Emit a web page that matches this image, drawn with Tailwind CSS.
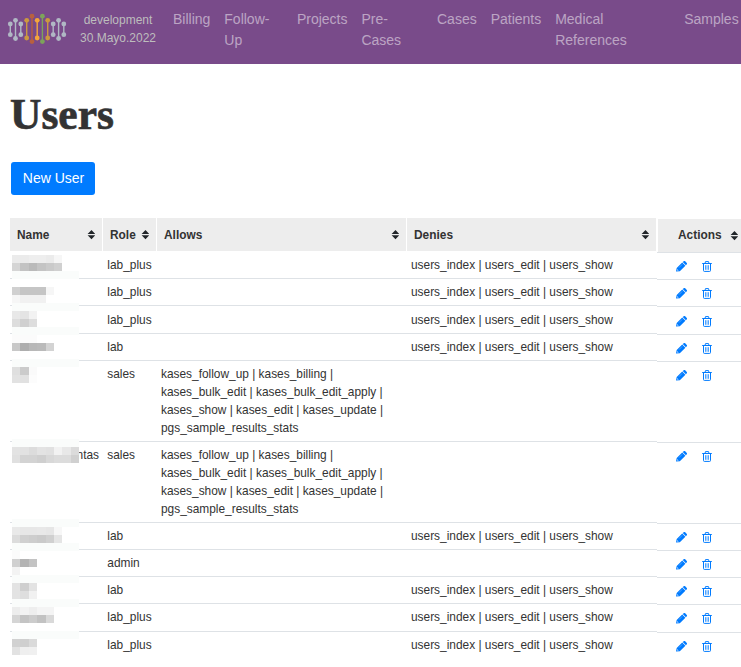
<!DOCTYPE html>
<html lang="en">
<head>
<meta charset="utf-8">
<title>Users</title>
<script src="https://cdn.jsdelivr.net/npm/@tailwindcss/browser@4"></script>
</head>
<body class="bg-white text-[#333] font-['Liberation_Sans',Arial,sans-serif] w-[741px] h-[667px] overflow-hidden">
<nav class="h-16 bg-[#794b8a] flex overflow-hidden">
  <svg id="logo" class="shrink-0 w-[72px] h-16" viewBox="0 0 72 64"></svg>
  <div class="w-[92px] shrink-0 pt-[11px] text-center text-[12px] leading-[18px] text-[#bdbdbd]">development<br>30.Mayo.2022</div>
  <div class="flex shrink-0 pl-[9px] pt-[9px] text-[14px] leading-[21px] text-white/50">
    <a class="shrink-0 w-[51.3px]">Billing</a>
    <a class="shrink-0 w-[72.6px]">Follow-<br>Up</a>
    <a class="shrink-0 w-[64.5px]">Projects</a>
    <a class="shrink-0 w-[75.6px]">Pre-<br>Cases</a>
    <a class="shrink-0 w-[53.7px]">Cases</a>
    <a class="shrink-0 w-[64.5px]">Patients</a>
    <a class="shrink-0 w-[129px]">Medical<br>References</a>
    <a class="shrink-0">Samples</a>
  </div>
</nav>
<main class="relative h-[603px] pl-[10px]">
  <h1 class="h-[98px] pt-[25px] font-['Liberation_Serif',serif] font-bold text-[43.5px] leading-[50px] [-webkit-text-stroke:0.7px_#333]">Users</h1>
  <button class="block ml-px w-[84px] h-[33px] rounded-[3px] bg-[#007bff] text-white text-[14px] leading-[33px] pl-px">New User</button>
  <div class="mt-[23px] flex text-[11.9px] leading-[18px]">
    <section class="w-[647px] shrink-0">
      <header class="flex h-[33px] gap-px w-[646px] font-bold leading-[33px]">
        <div class="w-[92px] bg-[#ededed] pl-[7px] pr-[7px] flex items-center justify-between"><span class="pt-px">Name</span><i class="sort"></i></div>
        <div class="w-[53px] bg-[#ededed] pl-[7px] pr-[7px] flex items-center justify-between"><span class="pt-px">Role</span><i class="sort"></i></div>
        <div class="w-[249px] bg-[#ededed] pl-[7px] pr-[7px] flex items-center justify-between"><span class="pt-px">Allows</span><i class="sort"></i></div>
        <div class="w-[249px] bg-[#ededed] pl-[7px] pr-[7px] flex items-center justify-between"><span class="pt-px">Denies</span><i class="sort"></i></div>
      </header>
      <div id="rows"></div>
    </section>
    <aside class="w-[84px] shrink-0 pt-px">
      <header class="ml-px h-[33px] bg-[#ededed] font-bold leading-[33px] pl-5 pr-[3px] flex items-center justify-between">Actions<i class="sort"></i></header>
      <div id="actions" class="border-t border-[#dee2e6]"></div>
    </aside>
  </div>
  <svg id="mosaic" class="absolute left-3 top-[191px] w-[67px] h-[412px]" viewBox="12 255 67 412" shape-rendering="crispEdges"></svg>
</main>
<script>
const D = 'users_index | users_edit | users_show';
const A = 'kases_follow_up | kases_billing |<br>kases_bulk_edit | kases_bulk_edit_apply |<br>kases_show | kases_edit | kases_update |<br>pgs_sample_results_stats';
// role, allows, denies, row height, text offset, name
const rows = [
  ['lab_plus','',D,28,5,''],['lab_plus','',D,27,4,''],['lab_plus','',D,28,5,''],['lab','',D,27,4,''],
  ['sales',A,'',81,4,''],['sales',A,'',81,4,'ntas'],['lab','',D,27,4,''],['admin','','',27,4,''],
  ['lab','',D,27,4,''],['lab_plus','',D,28,4,''],['lab_plus','',D,27,4,'']
];
document.getElementById('rows').innerHTML = rows.map(r =>
  `<div class="flex border-b border-[#dee2e6] last:border-b-0" style="height:${r[3]}px;padding-top:${r[4]}px">
    <span class="w-[89px] mr-[8.3px] shrink-0 text-right">${r[5]}</span><span class="w-[53.7px] shrink-0">${r[0]}</span>
    <span class="w-[250px] shrink-0 whitespace-nowrap leading-[17.85px] pt-px">${r[1]}</span><span class="whitespace-nowrap">${r[2]}</span></div>`).join('');
const pencil = '<svg class="w-[11px] h-[11px]" viewBox="0 0 11 11"><path fill="#007bff" d="M0 10.6.7 7 6.2 1.5 9.4 4.7 3.8 10.2ZM6.7 1 7.7.2Q8.5-.3 9.2.3L10.8 1.9Q11.3 2.6 10.8 3.3L9.9 4.2Z"/><path d="M1.3 8.3 2.6 9.5 1.8 9.7 1.1 9.1Z" fill="#fff"/><path d="M3 6.6 6.2 3.4" stroke="#fff" stroke-width=".3"/></svg>';
const trash = '<svg class="w-[10px] h-[11px]" viewBox="0 0 10 11" fill="none" stroke="#007bff"><path d="M.2 2.5H9.8M3 2.3 3.5.6H6.5L7 2.3M1.5 2.7V9.5Q1.5 10.4 2.3 10.4H7.7Q8.5 10.4 8.5 9.5V2.7"/><path d="M3.5 4.2V8.8M5 4.2V8.8M6.5 4.2V8.8" stroke-width=".7"/></svg>';
document.getElementById('actions').innerHTML = rows.map((r,i) =>
  `<div class="flex items-start border-b border-[#dee2e6] last:border-b-0 pl-[19px] gap-[15px]" style="height:${i ? r[3] : 27}px;padding-top:${i ? r[4]+4 : 8}px">${pencil}${trash}</div>`).join('');
document.querySelectorAll('.sort').forEach(e => e.outerHTML = '<svg class="w-[8px] h-[10px] shrink-0" viewBox="0 0 8 10"><path fill="#212529" d="M4.5 0 8.4 4.1H.6ZM.6 5.2H8.4L4.5 9.3Z"/></svg>');

const cols = [[10.3,24,34.7,'#b0b8c4'],[15.5,20.3,38.5,'#b0b8c4'],[20.8,24,34.7,'#b0b8c4'],[26.7,20.3,38,'#cc983f'],[32,16.2,41.6,'#b8603f'],[37.2,20.3,38,'#f5a53a'],[42.4,16.2,41.6,'#7da35a'],[47.7,20.3,38,'#cc983f'],[53.2,24,34.7,'#b0b8c4'],[58.6,20.3,38.5,'#b0b8c4'],[63.8,24,34.7,'#b0b8c4']];
document.getElementById('logo').innerHTML = cols.map(([x,a,b,c]) =>
  `<path d="M${x} ${a}V${b}" stroke="${c}" stroke-width="1.4"/><circle cx="${x}" cy="${a}" r="2.4" fill="${c}"/><circle cx="${x}" cy="${b}" r="2.4" fill="${c}"/>`).join('');

// redacted names: top of each 8px band and its cell shades
const X = [12,20,29,37,46,54,62,71,79], S = 'fafcfb';
const bands = [
  [255,'ebebeb ebebeb eeeeee eeeeee ebebeb f6f6f6'],[263,'d5d5d5 c3c3c3 bababa c4c4c4 cacaca d0d0d0'],[271,S],
  [287,'d0d0d0 c5c5c5 c5c5c5 c5c5c5 f6f6f6'],[295,'f6f6f6 f1f1f1 f1f1f1 f1f1f1'],[303,S],
  [311,'e8e8e8 e4e4e4 f2f2f2'],[319,'dddddd d0d0d0 dddddd'],[327,S],[335,'fbfbfb fbfbfb fbfbfb'],
  [343,'c8c8c8 aeaeae b8b8b8 bababa d3d3d3'],[359,S],[367,'dfdfdf cbcbcb fafafa'],[375,'e2e2e2 e1e1e1 fcfcfc'],
  [439,S],[447,'e3e3e3 e2e2e2 dcdcdc e3e3e3 e1e1e1 f2f2f2 e8e8e8 dbdbdb'],[455,'e0e0e0 d3d3d3 d3d3d3 cfcfcf d8d8d8 dcdcdc dcdcdc d0d0d0'],
  [519,S],[527,'e9e9e9 e7e7e7 e7e7e7 e8e8e8 e6e6e6 f7f7f7'],[535,'dcdcdc d0d0d0 cdcdcd cacaca d0d0d0 e5e5e5'],[543,S],
  [551,'fbfbfb'],[559,'d0d0d0 b4b4b4 c3c3c3'],[567,'f3f3f3'],[575,S],[583,'e3e3e3 cfcfcf e3e3e3'],[591,'e3e3e3 dedede f1f1f1'],
  [599,S],[607,'ededed f3f3f3 eeeeee f4f4f4 f4f4f4'],[615,'d5d5d5 c4c4c4 cccccc c2c2c2 d9d9d9'],[631,S],[639,'d1d1d1 cfcfcf dadada'],[647,'e2e2e2 efefef f0f0f0']
];
document.getElementById('mosaic').innerHTML = bands.map(([y,s]) => s === S
  ? `<rect x="12" y="${y}" width="67" height="8" fill="#fafcfb"/>`
  : s.split(' ').map((c,i) => `<rect x="${X[i]}" y="${y}" width="${X[i+1]-X[i]}" height="8" fill="#${c}"/>`).join('')).join('');
</script>
</body>
</html>
